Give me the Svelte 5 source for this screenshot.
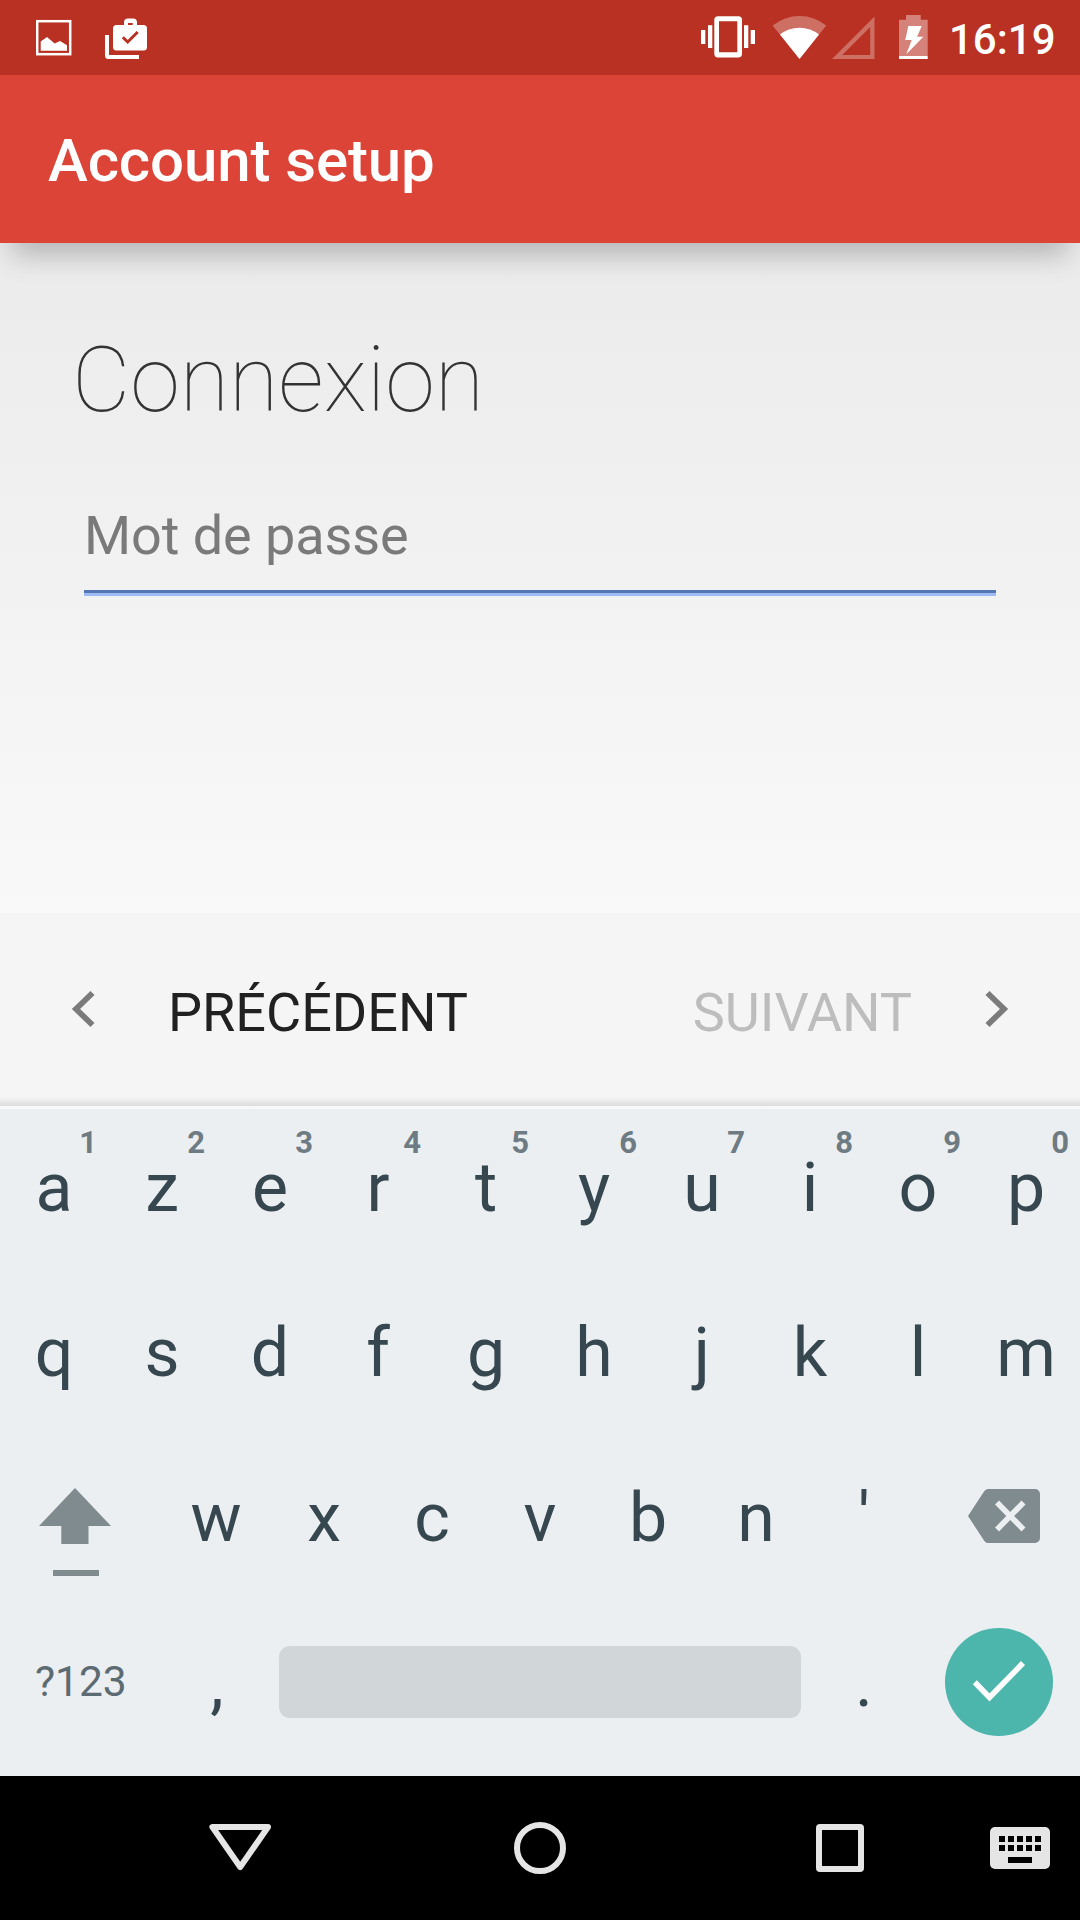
<script>
  const topRow = [...'azertyuiop'].map((letter, i) => ({ letter, hint: (i + 1) % 10 }));
  const homeRow = [...'qsdfghjklm'];
  const bottomRow = [..."wxcvbn'"];
  const miniKeys = [0, 1, 2, 3, 4];
</script>

<div class="screen">
  <header class="status">
    <div class="notifications">
      <svg width="36" height="75" viewBox="36 0 36 75">
        <rect x="37.2" y="21.200" width="33" height="33" fill="none" stroke="#fff" stroke-width="2.500" />
        <path d="M40.7 50.7V41.5L47 37l7.7 6.6L60 41l7 4.3v5.4z" fill="#fff" />
      </svg>
      <svg width="42" height="75" viewBox="105 0 42 75">
        <path fill="#fff" fill-rule="evenodd" d="M116.5 25H124v-2.5a4 4 0 0 1 4-4h5a4 4 0 0 1 4 4V25h6.500a3.500 3.500 0 0 1 3.500 3.500V47a3.500 3.500 0 0 1-3.500 3.500h-27a3.500 3.500 0 0 1-3.500-3.500V28.500a3.500 3.500 0 0 1 3.500-3.500zM128 25h4.700v-2H128z" />
        <path d="M105 35h4v20h30v4h-30.500a3.500 3.500 0 0 1-3.500-3.500z" fill="#fff" />
        <path d="M122.800 37.200l4.900 4.800 10-10" fill="none" stroke="#b93122" stroke-width="3" />
      </svg>
    </div>
    <div class="system">
      <svg class="vibrate" width="54" height="75" viewBox="701 0 54 75">
        <path d="M701 30h4.300v14H701zM708 25.300h4.300V48H708zM744 25.300h4.300V48H744zM750.700 30h4.300v14h-4.300z" fill="#fff" />
        <path fill="#fff" fill-rule="evenodd" d="M718 16.300h20.300a3.700 3.700 0 0 1 3.700 3.700v33.700a3.700 3.700 0 0 1-3.700 3.700H718a3.700 3.700 0 0 1-3.700-3.700V20a3.700 3.700 0 0 1 3.700-3.700zM719 21.200v31h18.300v-31z" />
      </svg>
      <svg class="wifi" width="54" height="75" viewBox="773 0 54 75">
        <path d="M799.500 59L772.700 25.600a42.500 42.500 0 0 1 53.600 0z" fill="#fff" fill-opacity=".3" />
        <path d="M799.500 59L780 34.500a31.500 31.500 0 0 1 39 0z" fill="#fff" />
      </svg>
      <svg class="signal" width="43" height="75" viewBox="831.500 0 43 75">
        <path fill="#fff" fill-opacity=".3" fill-rule="evenodd" d="M831.500 59L874 16.400V59zM841.700 55h28V27z" />
      </svg>
      <svg class="battery" width="29" height="75" viewBox="899 0 29 75">
        <path d="M899 56V19.700h7V15h14.700v4.700h7V56z" fill="#fff" fill-opacity=".4" />
        <path d="M899 56h28.700v3H899zM908.300 26h13.400l-4.600 10.700h6.200l-17 17.600 5.400-14.300h-6.400z" fill="#fff" />
      </svg>
      <span class="clock">16:19</span>
    </div>
  </header>

  <div class="appbar"><h1>Account setup</h1></div>

  <main>
    <h2>Connexion</h2>
    <div class="field"><span>Mot de passe</span></div>
  </main>

  <footer>
    <svg width="24" height="40" viewBox="0 0 24 40"><path d="M21.500 3L5 19l16.500 16" fill="none" stroke="#7b7b7b" stroke-width="5.800" /></svg>
    <span class="prev">PRÉCÉDENT</span>
    <span class="next">SUIVANT</span>
    <svg width="24" height="40" viewBox="0 0 24 40"><path d="M2.500 3L19 19 2.500 35" fill="none" stroke="#7b7b7b" stroke-width="5.800" /></svg>
  </footer>

  <section class="keyboard">
    <div class="row">
      {#each topRow as key}
        <div class="key">{key.letter}<span class="hint">{key.hint}</span></div>
      {/each}
    </div>
    <div class="row">
      {#each homeRow as letter}
        <div class="key">{letter}</div>
      {/each}
    </div>
    <div class="row">
      <div class="wide shift">
        <svg width="73" height="90" viewBox="38 1487 73 90">
          <path d="M75 1488l36 38H88.500v18H61.300v-18H39zM53 1570h46v6H53z" fill="#808b8f" />
        </svg>
      </div>
      {#each bottomRow as letter}
        <div class="key">{letter}</div>
      {/each}
      <div class="wide delete">
        <svg width="72" height="54" viewBox="968 1489 72 54">
          <path d="M988 1489h47a5 5 0 0 1 5 5v44a5 5 0 0 1-5 5h-47q-2.500 0-4-2.500L968 1516l16-24.500q1.500-2.500 4-2.500z" fill="#808b8f" />
          <path d="M997 1502.500l26.500 27M1023.500 1502.500l-26.500 27" stroke="#ebeff2" stroke-width="5.600" />
        </svg>
      </div>
    </div>
    <div class="row last">
      <div class="wide symbols">?123</div>
      <div class="key comma">,</div>
      <div class="space"></div>
      <div class="key">.</div>
      <div class="wide enter">
        <svg width="108" height="108" viewBox="945 1628 108 108">
          <circle cx="999" cy="1682" r="54" fill="#4db6ac" />
          <path d="M974.800 1682.300l14.700 15.200 33.500-34.500" fill="none" stroke="#fff" stroke-width="5.600" />
        </svg>
      </div>
    </div>
  </section>

  <nav>
    <svg class="back" width="64" height="56" viewBox="208 1820 64 56">
      <path d="M212.400 1827h55.600L240.200 1867z" fill="none" stroke="#e5e5e5" stroke-width="6" stroke-linejoin="round" />
    </svg>
    <svg class="home" width="56" height="56" viewBox="0 0 56 56">
      <circle cx="28" cy="28" r="23" fill="none" stroke="#e5e5e5" stroke-width="6" />
    </svg>
    <svg class="recents" width="48" height="48" viewBox="0 0 48 48">
      <path fill="#e5e5e5" fill-rule="evenodd" d="M4 0h40a4 4 0 0 1 4 4v40a4 4 0 0 1-4 4H4a4 4 0 0 1-4-4V4a4 4 0 0 1 4-4zM6 6v36h36V6z" />
    </svg>
    <svg class="ime" width="60" height="42" viewBox="0 0 60 42">
      <rect width="60" height="42" rx="5" fill="#e5e5e5" />
      {#each miniKeys as k}
        <rect x={9 + k * 9} y="9" width="6" height="6" />
        <rect x={9 + k * 9} y="18" width="6" height="6" />
      {/each}
      <rect x="18" y="30" width="24" height="6" />
    </svg>
  </nav>
</div>

<style>
  :global(body) {
    margin: 0;
  }
  .screen {
    width: 1080px;
    height: 1920px;
    display: flex;
    flex-direction: column;
    overflow: hidden;
    font-family: Roboto, sans-serif;
  }
  svg {
    display: block;
    flex: none;
  }
  .status {
    height: 75px;
    flex: none;
    box-sizing: border-box;
    padding: 0 25px 0 36px;
    display: flex;
    justify-content: space-between;
    background: #b93122;
    position: relative;
    z-index: 1;
  }
  .notifications,
  .system {
    display: flex;
  }
  .notifications {
    gap: 33px;
  }
  .wifi {
    margin-left: 17.5px;
  }
  .signal {
    margin-left: 5px;
  }
  .battery {
    margin-left: 24.5px;
  }
  .clock {
    margin-left: 21px;
    width: 106px;
    color: #fff;
    font-size: 42px;
    font-weight: 500;
    line-height: 79px;
    white-space: nowrap;
  }
  .appbar {
    height: 168px;
    flex: none;
    box-sizing: border-box;
    padding: 4px 48px 0;
    background: #db4437;
    display: flex;
    align-items: center;
    position: relative;
    box-shadow: 0 24px 26px -12px rgba(0, 0, 0, 0.23);
  }
  h1,
  h2 {
    margin: 0;
  }
  h1 {
    color: #fff;
    font-size: 60px;
    font-weight: 500;
    line-height: 70px;
    letter-spacing: -0.12px;
  }
  main {
    height: 670px;
    flex: none;
    box-sizing: border-box;
    padding: 78px 84px 0;
    background: linear-gradient(#ebebeb, #f9f9f9);
  }
  h2 {
    margin-left: -12px;
    color: #333;
    font-size: 90px;
    font-weight: 100;
    line-height: 120px;
  }
  .field {
    height: 152px;
    box-sizing: border-box;
    padding-top: 65px;
    border-bottom: 3px solid #5677b5;
    box-shadow: 0 3px #9dbcf3;
    color: #7a7a7a;
    font-size: 54px;
    line-height: 60px;
    letter-spacing: -0.08px;
  }
  footer {
    height: 193px;
    flex: none;
    box-sizing: border-box;
    padding: 0 71px 0 71px;
    display: flex;
    align-items: center;
    background: linear-gradient(transparent 184px, rgba(0, 0, 0, 0.1)) #f5f5f5;
    font-size: 54px;
    line-height: 64px;
  }
  .prev {
    margin: 6px auto 0 73px;
    color: #212121;
  }
  .next {
    margin: 6px 73px 0 0;
    color: #bdbdbd;
  }
  .keyboard {
    height: 670px;
    flex: none;
    box-sizing: border-box;
    border-top: 3px solid #f6f8f9;
    background: #ebeff2;
    color: #37474f;
  }
  .row {
    height: 165px;
    display: flex;
  }
  .key {
    width: 108px;
    flex: none;
    box-sizing: border-box;
    position: relative;
    text-align: center;
    font-size: 68px;
    line-height: 158px;
  }
  .comma {
    padding-left: 2px;
  }
  .hint {
    position: absolute;
    right: 11px;
    top: 16px;
    color: #6e7b82;
    font-size: 31px;
    font-weight: 700;
    line-height: 36px;
  }
  .wide {
    width: 162px;
    flex: none;
    box-sizing: border-box;
  }
  .shift {
    padding: 48px 0 0 38px;
  }
  .delete {
    padding: 50px 0 0 50px;
  }
  .symbols {
    padding-left: 35px;
    color: #5c6b72;
    font-size: 42.5px;
    line-height: 156px;
  }
  .space {
    width: 522px;
    height: 72px;
    margin: 42px 9px 0;
    border-radius: 11px;
    background: #d1d6d9;
  }
  .enter {
    padding: 24px 0 0 27px;
  }
  nav {
    height: 144px;
    flex: none;
    display: grid;
    grid-template-columns: 300px 300px 300px 90px;
    padding-left: 90px;
    align-items: center;
    justify-items: center;
    background: #000;
  }
  .ime {
    justify-self: start;
  }
</style>
